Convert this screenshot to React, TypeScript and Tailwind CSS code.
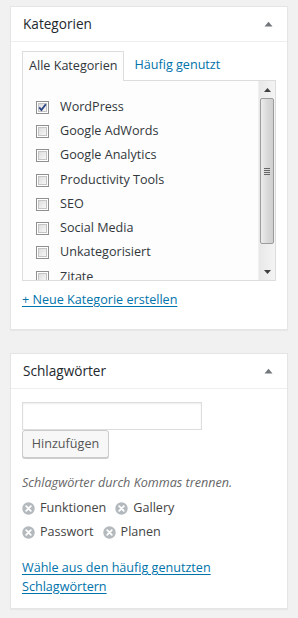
import React from "react";

function CheckBox({ checked }: { checked?: boolean }) {
  return (
    <svg width="13" height="13" viewBox="0 0 13 13" className="shrink-0">
      <defs>
        <linearGradient id="cbg" x1="0" y1="0" x2="1" y2="1">
          <stop offset="0" stopColor="#dcdcdc" />
          <stop offset="1" stopColor="#f8f8f8" />
        </linearGradient>
      </defs>
      <rect x="0.5" y="0.5" width="12" height="12" fill="#ffffff" stroke="#8e8f8f" />
      <rect x="2.5" y="2.5" width="8" height="8" fill="url(#cbg)" stroke="#c4c4c4" />
      {checked && (
        <path d="M3.2 6.4 L5.4 9 L9.8 3.2" fill="none" stroke="#2c4585" strokeWidth="1.8" />
      )}
    </svg>
  );
}

function TagX() {
  return (
    <svg width="13" height="13" viewBox="0 0 13 13" className="shrink-0">
      <circle cx="6.5" cy="6.5" r="6.2" fill="#b4b9be" />
      <path d="M4.2 4.2 L8.8 8.8 M8.8 4.2 L4.2 8.8" stroke="#ffffff" strokeWidth="1.8" strokeLinecap="round" />
    </svg>
  );
}

function Caret() {
  return (
    <svg width="9" height="6" viewBox="0 0 9 6">
      <path d="M0.5 5.5 L4.5 0.8 L8.5 5.5 Z" fill="#72777c" />
    </svg>
  );
}

function ScrollBar() {
  return (
    <div className="w-[17px] shrink-0 flex flex-col bg-[linear-gradient(to_right,#e8e8e8,#f4f4f4)] border-l border-[#f0f0f0]">
      <div className="h-[17px] flex items-center justify-center">
        <svg width="7" height="4" viewBox="0 0 7 4">
          <path d="M0 4 L3.5 0 L7 4 Z" fill="#404040" />
        </svg>
      </div>
      <div className="h-[146px] mx-[1px] rounded-[2px] border border-[#9c9c9c] bg-[linear-gradient(to_right,#ececec,#dadada_50%,#cfcfcf)] flex items-center justify-center">
        <div className="flex flex-col gap-[1px]">
          <div className="w-[6px] h-[1px] bg-[#666]" />
          <div className="w-[6px] h-[1px] bg-[#666]" />
          <div className="w-[6px] h-[1px] bg-[#666]" />
          <div className="w-[6px] h-[1px] bg-[#666]" />
        </div>
      </div>
      <div className="flex-1" />
      <div className="h-[17px] flex items-center justify-center">
        <svg width="7" height="4" viewBox="0 0 7 4">
          <path d="M0 0 L3.5 4 L7 0 Z" fill="#404040" />
        </svg>
      </div>
    </div>
  );
}

const cats = [
  { name: "WordPress", checked: true },
  { name: "Google AdWords" },
  { name: "Google Analytics" },
  { name: "Productivity Tools" },
  { name: "SEO" },
  { name: "Social Media" },
  { name: "Unkategorisiert" },
  { name: "Zitate" },
];

export default function App() {
  return (
    <div className="min-h-[618px] bg-[#f1f1f1] pt-[6px] px-[10px] text-[12.6px] text-[#444] font-['Open_Sans',sans-serif]">
      {/* Kategorien */}
      <div className="bg-white border border-[#e5e5e5] shadow-[0_1px_1px_rgba(0,0,0,0.04)]">
        <div className="h-[35px] flex items-center justify-between pl-[12px] pr-[14px] border-b border-[#eeeeee]">
          <span className="text-[13.6px] font-medium text-[#23282d]">Kategorien</span>
          <Caret />
        </div>
        <div className="px-[11px] pt-[8px] pb-[19px]">
          <div className="flex items-end">
            <div className="h-[30px] px-[6px] flex items-center border border-b-0 border-[#dddddd] bg-[#fdfdfd] text-[#32373c] relative top-[1px] z-10">
              Alle Kategorien
            </div>
            <div className="h-[30px] pl-[10px] flex items-center text-[#0073aa]">Häufig genutzt</div>
          </div>
          <div className="h-[201px] border border-[#dddddd] bg-[#fdfdfd] flex">
            <div className="flex-1 overflow-hidden pl-[13px] pt-[14px]">
              {cats.map((c) => (
                <div key={c.name} className="h-[24.3px] flex items-center gap-[11px] text-[#32373c]">
                  <CheckBox checked={c.checked} />
                  <span>{c.name}</span>
                </div>
              ))}
            </div>
            <ScrollBar />
          </div>
          <div className="mt-[9px] leading-[20px]">
            <a className="text-[#0073aa] underline underline-offset-[2px]">+ Neue Kategorie erstellen</a>
          </div>
        </div>
      </div>

      {/* Schlagwörter */}
      <div className="mt-[23px] bg-white border border-[#e5e5e5] shadow-[0_1px_1px_rgba(0,0,0,0.04)]">
        <div className="h-[35px] flex items-center justify-between pl-[12px] pr-[14px] border-b border-[#eeeeee]">
          <span className="text-[13.6px] font-medium text-[#23282d]">Schlagwörter</span>
          <Caret />
        </div>
        <div className="px-[11px] pt-[13px] pb-[12px]">
          <div className="w-[180px] h-[28px] border border-[#dddddd] shadow-[inset_0_1px_2px_rgba(0,0,0,0.07)] bg-white" />
          <div className="w-[87px] h-[28px] border border-[#cccccc] bg-[#f7f7f7] rounded-[3px] shadow-[0_1px_0_#cccccc] flex items-center justify-center text-[#555]">
            Hinzufügen
          </div>
          <div className="mt-[16px] leading-[18px] italic text-[#666]">Schlagwörter durch Kommas trennen.</div>
          <div className="mt-[4px] flex flex-col">
            <div className="h-[24px] flex items-center">
              <TagX />
              <span className="ml-[5px]">Funktionen</span>
              <span className="ml-[9px]"><TagX /></span>
              <span className="ml-[5px]">Gallery</span>
            </div>
            <div className="h-[24px] flex items-center">
              <TagX />
              <span className="ml-[5px]">Passwort</span>
              <span className="ml-[9px]"><TagX /></span>
              <span className="ml-[5px]">Planen</span>
            </div>
          </div>
          <div className="mt-[14px] leading-[19px]">
            <a className="text-[#0073aa] underline underline-offset-[2px]">
              Wähle aus den häufig genutzten
              <br />
              Schlagwörtern
            </a>
          </div>
        </div>
      </div>
    </div>
  );
}
